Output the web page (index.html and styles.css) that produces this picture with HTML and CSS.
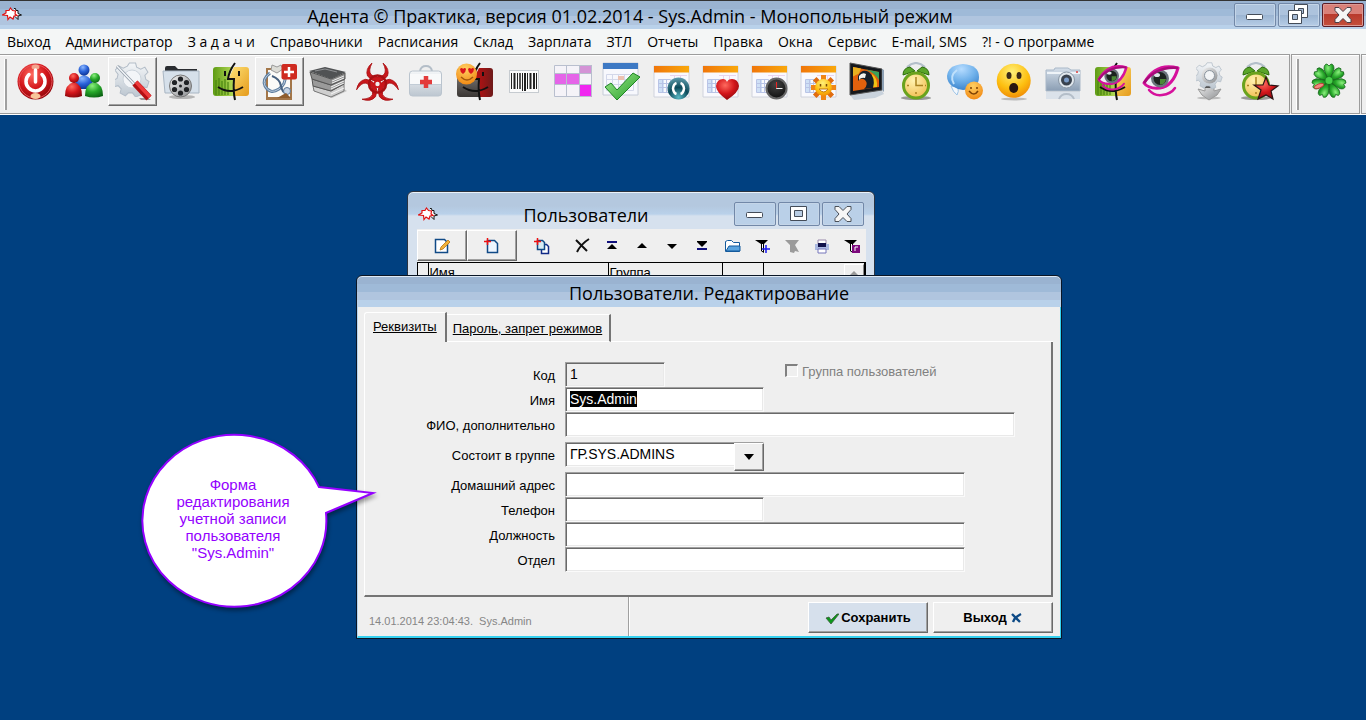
FILE: index.html
```html
<!DOCTYPE html>
<html lang="ru">
<head>
<meta charset="utf-8">
<title>Адента © Практика</title>
<link rel="stylesheet" href="styles.css">
</head>
<body>
<svg class="sprite" aria-hidden="true">
  <defs>
    <radialGradient id="gRed" cx=".4" cy=".3" r=".8"><stop offset="0" stop-color="#ff6a5e"/><stop offset=".5" stop-color="#d3161b"/><stop offset="1" stop-color="#7d0509"/></radialGradient>
    <radialGradient id="gBlue" cx=".4" cy=".25" r=".8"><stop offset="0" stop-color="#8db8ff"/><stop offset=".5" stop-color="#2a62d8"/><stop offset="1" stop-color="#0b2f8e"/></radialGradient>
    <radialGradient id="gGreen" cx=".4" cy=".25" r=".8"><stop offset="0" stop-color="#8cf07e"/><stop offset=".5" stop-color="#27a82a"/><stop offset="1" stop-color="#0a6212"/></radialGradient>
    <radialGradient id="gSky" cx=".45" cy=".2" r=".9"><stop offset="0" stop-color="#b6dcff"/><stop offset=".5" stop-color="#6eb0ea"/><stop offset="1" stop-color="#2f78c4"/></radialGradient>
    <radialGradient id="gYellow" cx=".45" cy=".25" r=".8"><stop offset="0" stop-color="#fff07a"/><stop offset=".6" stop-color="#fdbf10"/><stop offset="1" stop-color="#ee8606"/></radialGradient>
    <radialGradient id="gOrange" cx=".45" cy=".25" r=".8"><stop offset="0" stop-color="#ffd063"/><stop offset="1" stop-color="#f1860f"/></radialGradient>
    <radialGradient id="gTeal" cx=".5" cy=".9" r=".9"><stop offset="0" stop-color="#58b8c4"/><stop offset=".5" stop-color="#0c4a5a"/><stop offset="1" stop-color="#5f9cac"/></radialGradient>
    <radialGradient id="gBlack" cx=".45" cy=".3" r=".8"><stop offset="0" stop-color="#444"/><stop offset="1" stop-color="#0a0a0a"/></radialGradient>
    <linearGradient id="gSteel" x2="0" y2="1"><stop offset="0" stop-color="#f4f6f8"/><stop offset="1" stop-color="#bcc6d0"/></linearGradient>
    <linearGradient id="gGrey" x2="1" y2="1"><stop offset="0" stop-color="#f2f2f2"/><stop offset="1" stop-color="#8b8d90"/></linearGradient>
    <linearGradient id="gCam" x2="0" y2="1"><stop offset="0" stop-color="#d5dfea"/><stop offset="1" stop-color="#8a9db3"/></linearGradient>
    <linearGradient id="gBar" x2="1"><stop offset="0" stop-color="#f0760a"/><stop offset="1" stop-color="#f9a80c"/></linearGradient>
    <linearGradient id="gLime" x2="1"><stop offset="0" stop-color="#5f9c14"/><stop offset="1" stop-color="#b9de5c"/></linearGradient>
    <linearGradient id="gSand" x2="1" y2="1"><stop offset="0" stop-color="#ffe479"/><stop offset="1" stop-color="#e59b1c"/></linearGradient>
    <linearGradient id="gWine" x2="1"><stop offset="0" stop-color="#c80f10"/><stop offset="1" stop-color="#6e1a1a"/></linearGradient>
    <linearGradient id="gCoal" x2="0" y2="1"><stop offset="0" stop-color="#8a8683"/><stop offset="1" stop-color="#3a3634"/></linearGradient>
    <linearGradient id="gCheck" x2="1" y2="1"><stop offset="0" stop-color="#a2ec90"/><stop offset="1" stop-color="#1f9a24"/></linearGradient>
    <radialGradient id="gClock" cx=".4" cy=".3" r=".8"><stop offset="0" stop-color="#fff3b0"/><stop offset="1" stop-color="#efb848"/></radialGradient>
    <symbol id="logo" viewBox="0 0 20 14">
      <path d="M12 1.500h1.500l.5 2h2v3l3.500 1.500-3.500 1v3.500l-3-3" fill="#fff" stroke="#111"/>
      <path d="M8.500 1l2 2.500 3 .5-.5 3 2 1.500-3 .5-1 3-3-2-2 2.500-.5-4L.5 8 4 6V3.500h3z" fill="#fff" stroke="#e01010" stroke-width="1.200"/>
    </symbol>
    <symbol id="gear" viewBox="0 0 34 34">
      <path d="M14 1h6l1 4 4 2 4-2 3 5-3 3 1 4 3 2-2 6-4-1-3 4 1 4-5 2-3-4h-4l-3 3-5-3 1-4-3-3-4 1-1-6 4-2 1-4-3-4 4-4 4 2 4-2z" fill="url(#gSteel)" stroke="#b3bdc8"/>
    </symbol>
    <symbol id="calendar" viewBox="0 0 39 39">
      <path d="M2 4h35v31H2z" fill="#f9f9fd" stroke="#cfd2dc"/>
      <path d="M7 18h5v12H7z" fill="#cfe0f6"/>
      <path d="M6.500 17.500h12v13h-12zM6.500 21.500h28M6.500 25.500h28M10.500 17v13M14.500 17v13" fill="none" stroke="#b9c4e6"/>
      <path d="M2 4h35v6.500H2z" fill="url(#gBar)"/>
      <path d="M18 13.500h17M22.500 14v14M28.500 14v14" stroke="#ead3ee"/>
    </symbol>
    <symbol id="faces" viewBox="0 0 39 39">
      <path d="M5 5h17l-5 12h6l1 17H5q-3 0-3-3V8q0-3 3-3z" fill="url(#gLime)"/>
      <path d="M5 18v15M8 16v17M11 19v14M14 17v16M17 20v13" stroke="#4b8612" stroke-width="1.200"/>
      <path d="M23 5h12q3 0 3 3v23q0 3-3 3H24l-1-16h-6z" fill="url(#gSand)"/>
      <path d="M24 1q-6 8-7 16h6q-1 12 1 21M7 25q12 8 25 0" fill="none" stroke="#111" stroke-width="2"/>
      <path d="M14 9v5M28 9v5" stroke="#111" stroke-width="2"/>
    </symbol>
    <symbol id="eye" viewBox="0 0 38 34">
      <path d="M2 19Q14-2 36 4 31 22 18 24 6 25 2 19z" fill="#eef2f6" stroke="#d6119c" stroke-width="3" stroke-linejoin="round"/>
      <circle cx="18" cy="14.500" r="9" fill="#6b747c"/>
      <circle cx="18" cy="14.500" r="6.500" fill="#1c2420"/>
      <path d="M18 15l6 0q-1 6-6 5.500z" fill="#4c8a36"/>
      <ellipse cx="15" cy="11" rx="3" ry="2" fill="#dfe6ea"/>
      <path d="M2 19Q14 2 36 4" fill="none" stroke="#a80a7a" stroke-width="2.500"/>
      <path d="M7 26q5 6 13 5 9-1 13-7" fill="none" stroke="#d6119c" stroke-width="2.500" stroke-linecap="round"/>
    </symbol>
    <symbol id="alarm" viewBox="0 0 39 39">
      <ellipse cx="19" cy="36" rx="15" ry="2" fill="#999"/>
      <path d="M10 5q9-8 18 0M13 8l-1-4M25 8l1-4" fill="none" stroke="#b4bfca" stroke-width="2"/>
      <path d="M6 13q0-7 7-8l5 4zM32 13q0-7-7-8l-5 4z" fill="#5aa52a" stroke="#2d6c0c"/>
      <circle cx="19" cy="23.500" r="12.500" fill="url(#gClock)" stroke="#6aa31d" stroke-width="3"/>
      <path d="M19 15v8.500h7M19 32v-2M10 23.500h2M28 23.500h1" fill="none" stroke="#a88220" stroke-width="1.500"/>
    </symbol>
    <path id="horn" d="M14 1Q7 7 9.500 14q4.500 5.500 10 5.500t10-5.500Q32 7 25 1q4 8 1 11.500-2.500 2.500-6.500 2.500T13 12.500Q10 9 14 1z"/>
  </defs>
</svg>

<header class="titlebar">
  <svg class="logo"><use href="#logo"/></svg>
  <h1 class="caption">Адента © Практика, версия 01.02.2014 - Sys.Admin - Монопольный режим</h1>
  <div class="winbtns">
    <button class="winbtn" aria-label="Свернуть"><svg viewBox="0 0 42 24"><rect x="12.500" y="11.500" width="16" height="5" rx="1" fill="#fff" stroke="#444c58"/></svg></button>
    <button class="winbtn" aria-label="Восстановить"><svg viewBox="0 0 42 24"><path d="M16.500 1.500h13v13h-13z" fill="#fff" stroke="#444c58"/><path d="M20.500 5.500h5v5h-5z" fill="#a5bad4" stroke="#444c58"/><path d="M10.500 7.500h13v13h-13z" fill="#fff" stroke="#444c58"/><path d="M14.500 11.500h5v5h-5z" fill="#a5bad4" stroke="#444c58"/></svg></button>
    <button class="winbtn winbtn-close" aria-label="Закрыть"><svg viewBox="0 0 42 24"><path d="M13 4.500h4l4 4 4-4h4v3l-4 4.500 4 4.500v3h-4l-4-4-4 4h-4v-3l4-4.500-4-4.500z" fill="#f6f6f6" stroke="#4a4048"/></svg></button>
  </div>
</header>

<nav class="menu">
  <a href="#">Выход</a><a href="#">Администратор</a><a href="#">З а д а ч и</a><a href="#">Справочники</a><a href="#">Расписания</a><a href="#">Склад</a><a href="#">Зарплата</a><a href="#">ЗТЛ</a><a href="#">Отчеты</a><a href="#">Правка</a><a href="#">Окна</a><a href="#">Сервис</a><a href="#">E-mail, SMS</a><a href="#">?! - О программе</a>
</nav>

<div class="toolbar">
  <div class="band">
    <button class="tool" aria-label="Выход"><svg viewBox="0 0 39 39"><circle cx="20.500" cy="19.500" r="18" fill="url(#gRed)"/><circle cx="20.500" cy="19.500" r="16.500" fill="none" stroke="#e8555a"/><ellipse cx="20.500" cy="5" rx="4" ry="2.500" fill="#f3a58e"/><ellipse cx="20.500" cy="34" rx="5" ry="3" fill="#f8c59a"/><path d="M14 12.500a9.500 9.500 0 1 0 13 0M20.500 8v12" fill="none" stroke="#fff" stroke-width="3.500" stroke-linecap="round"/></svg></button>
    <button class="tool" aria-label="Пользователи"><svg viewBox="0 0 39 39"><path d="M10 27q1-12 10-14 9 2 10 14z" fill="url(#gBlue)"/><circle cx="20" cy="8" r="5.500" fill="url(#gBlue)"/><path d="M1 34q0-12 9-14 8 2 8 14-8 3-17 0z" fill="url(#gRed)"/><circle cx="10" cy="16" r="5" fill="url(#gRed)"/><path d="M21 34q0-12 9-14 9 2 9 14-9 3-18 0z" fill="url(#gGreen)"/><circle cx="31" cy="16" r="5" fill="url(#gGreen)"/></svg></button>
    <button class="tool tool-raised" aria-label="Настройки"><svg viewBox="0 0 39 39"><use href="#gear" x="2" y="0" width="35" height="35"/><circle cx="19" cy="17" r="9" fill="#f3f5f8" stroke="#ccd4dc"/><path d="M4 4l18 19" stroke="#8f9aa6" stroke-width="3"/><path d="M4 4l18 19" stroke="#f3f6f9" stroke-width="1.500"/><path d="M26 36h9l3 2H28z" fill="#999"/><path d="M22 21l14 15" stroke="#b30f12" stroke-width="7"/><path d="M23 20l14 15" stroke="#ee3a3b" stroke-width="3.500"/></svg></button>
    <button class="tool" aria-label="Видео"><svg viewBox="0 0 39 39"><path d="M3 11V6q0-2 2-2h8l3 3h19v5z" fill="#2a2c30"/><path d="M1 9h36v22H3z" fill="#d6e0ea" stroke="#a9b6c3"/><ellipse cx="20" cy="35" rx="13" ry="2" fill="#b5b5b5"/><circle cx="18.500" cy="24" r="11" fill="url(#gGrey)" stroke="#777"/><g fill="#202225"><circle cx="18.500" cy="17" r="2.600"/><circle cx="24.500" cy="20.500" r="2.600"/><circle cx="24.500" cy="27.500" r="2.600"/><circle cx="18.500" cy="31" r="2.600"/><circle cx="12.500" cy="27.500" r="2.600"/><circle cx="12.500" cy="20.500" r="2.600"/><circle cx="18.500" cy="24" r="1.500"/></g></svg></button>
    <button class="tool" aria-label="Клиенты"><svg viewBox="0 0 39 39"><use href="#faces"/></svg></button>
    <button class="tool tool-raised" aria-label="Медкарта"><svg viewBox="0 0 39 39"><path d="M6 6h26v32H6z" fill="#a37648"/><path d="M8 8h22v27H8z" fill="#fbfbf8"/><path d="M12 3l5 2 4-2 2 4-6 4-6-3z" fill="#dcdcd6" stroke="#999"/><path d="M10 11q-8 6-5 13 5 9 14 3 7-5 6-13" fill="none" stroke="#5f7f9f" stroke-width="3"/><path d="M10 11q-8 6-5 13 5 9 14 3 7-5 6-13" fill="none" stroke="#bccde0" stroke-width="1"/><path d="M12 14q8 3 9 10 1 6 5 7" fill="none" stroke="#46607e" stroke-width="2"/><circle cx="27" cy="29" r="3.500" fill="#c4d3e4" stroke="#5c7896"/><path d="M17 36l9-5 5 5z" fill="#8f5d2c"/><rect x="21.500" y="2" width="15.500" height="15.500" rx="2" fill="#cf2b20"/><path d="M29 5v10M24 10h10" stroke="#fff" stroke-width="2.500"/></svg></button>
    <button class="tool" aria-label="Документы"><svg viewBox="0 0 39 39"><path d="M3 28l20 8 15-7-6-4z" fill="#c4c4c4"/><path d="M4 24l18 5 13-7v7l-13 6-17-6z" fill="#cfcfcf" stroke="#777"/><path d="M3 17l19 6 13-7v6l-13 7-18-5z" fill="#9a9a9a" stroke="#555"/><path d="M22 25l13-6M22 27l13-6M22 32l13-6" stroke="#f4f4f4"/><path d="M1 10l21 7 14-6v6l-14 6L3 17z" fill="#8d8d8d" stroke="#555"/><path d="M0 9L16 5l21 5-15 7z" fill="#505254"/><path d="M23 19l12-5M23 21l12-5" stroke="#f3f3f3"/><path d="M6 9l10-2 12 3" stroke="#8e9093" fill="none"/></svg></button>
    <button class="tool" aria-label="Биологическая опасность"><svg viewBox="0 0 39 39"><g fill="#c9171b" stroke="#a81013" stroke-width=".8"><use href="#horn"/><use href="#horn" transform="rotate(120 19.500 22)"/><use href="#horn" transform="rotate(240 19.500 22)"/></g><circle cx="19.500" cy="22" r="8.500" fill="none" stroke="#a81013" stroke-width="2.500"/><circle cx="19.500" cy="22" r="4" fill="#c9171b"/><circle cx="19.500" cy="22" r="2.200" fill="#efefef"/></svg></button>
    <button class="tool" aria-label="Аптечка"><svg viewBox="0 0 39 39"><path d="M13 9q1-5 6-5t6 5" fill="none" stroke="#b4bec8" stroke-width="2"/><rect x="2.500" y="9" width="32" height="25" rx="3" fill="url(#gSteel)" stroke="#bac4ce"/><path d="M3 12h31v10H3z" fill="#f8f9fa"/><path d="M3 22.500h31" stroke="#c2ccd6"/><path d="M19 14v12M13 20h12" stroke="#e33b3b" stroke-width="4.500"/></svg></button>
    <button class="tool" aria-label="Клиент с отметкой"><svg viewBox="0 0 39 39"><path d="M4 6h18l-5 12h6l1 17H4q-3 0-3-3V9q0-3 3-3z" fill="url(#gCoal)"/><path d="M23 6h11q3 0 3 3v23q0 3-3 3H24l-1-17h-6z" fill="url(#gWine)"/><path d="M24 1q-6 8-7 16h6q-1 12 1 21M7 25q12 8 25 0M27 10v4" fill="none" stroke="#111" stroke-width="2"/><circle cx="10.500" cy="12" r="10.500" fill="url(#gOrange)"/><path d="M4 7q2-2 3 0 2-2 3 0 0 3-3 5-3-2-3-5zM12 7q2-2 3 0 2-2 3 0 0 3-3 5-3-2-3-5z" fill="#d9151b"/><path d="M5 15q6 6 12 0" fill="none" stroke="#a5580c" stroke-width="1.500"/></svg></button>
    <button class="tool" aria-label="Штрихкод"><svg viewBox="0 0 39 39"><rect x="4.500" y="8.500" width="29" height="22" fill="#fbfbfb" stroke="#c6cbd0"/><path d="M6.500 11v16M12.500 11v16M17.500 11v18M22.500 11v16M31.500 11v16" stroke="#222"/><path d="M9.500 11v16M20 11v18M25.500 11v16M29 11v16" stroke="#222" stroke-width="2"/><path d="M15 11v16" stroke="#222" stroke-width="1.500"/></svg></button>
    <button class="tool" aria-label="Сетка"><svg viewBox="0 0 39 39"><path d="M0 3h38v32H0z" fill="#f5f3f8"/><path d="M0 12h26v10H0z" fill="#e564e8"/><path d="M26 3h12v8H26z" fill="#d493d6"/><path d="M26 23h12v12H26z" fill="#f027f0"/><path d="M.5 3.500h37v31H.5zM12.500 3v32M25.500 3v32M0 11.500h38M0 22.500h38" fill="none" stroke="#b9bfce"/></svg></button>
    <button class="tool" aria-label="Выполнено"><svg viewBox="0 0 39 39"><path d="M0 1h35v32H0z" fill="#f7f8fd" stroke="#c6ccd8"/><path d="M0 1h35v6H0z" fill="#3d79c4"/><path d="M3.500 12.500h27v16h-27zM3.500 17.500h27M3.500 22.500h27M9.500 12v16M15.500 12v16M21.500 12v16" fill="none" stroke="#d3d8ea"/><path d="M15 14h6v4h-6z" fill="#ecc2b2"/><path d="M2 25l6-4 6 7 16-17 7 4-23 23z" fill="url(#gCheck)" stroke="#1d8523"/></svg></button>
    <button class="tool" aria-label="Календарь обмена"><svg viewBox="0 0 39 39"><use href="#calendar"/><circle cx="26.500" cy="26.500" r="11" fill="url(#gTeal)"/><path d="M24.500 21q-3 1-3.500 5.500 .5 4.500 3.500 5.500M28.500 21q3 1 3.500 5.500-.5 4.500-3.500 5.500" fill="none" stroke="#fff" stroke-width="2.500"/></svg></button>
    <button class="tool" aria-label="Календарь избранного"><svg viewBox="0 0 39 39"><use href="#calendar"/><path d="M26 38q-11-8-11-14 1-7 7-7 3 0 4 3 1-3 5-3 6 0 7 7 0 6-12 14z" fill="url(#gRed)"/></svg></button>
    <button class="tool" aria-label="Календарь времени"><svg viewBox="0 0 39 39"><use href="#calendar"/><circle cx="26.500" cy="26.500" r="10" fill="url(#gBlack)" stroke="#666" stroke-width="2"/><path d="M26.500 20v6.500h6" fill="none" stroke="#eee"/><path d="M26.500 26v-6" stroke="#e22"/></svg></button>
    <button class="tool" aria-label="Календарь отпусков"><svg viewBox="0 0 39 39"><use href="#calendar"/><g stroke="#f08616" stroke-width="5"><path d="M24.500 13v25M12 25.500h25"/><path d="M15.700 16.700l17.600 17.600M33.300 16.700L15.700 34.300" stroke="#e06c10"/></g><circle cx="24.500" cy="25.500" r="8.500" fill="url(#gYellow)"/><path d="M21.500 22v2.500M27.500 22v2.500" stroke="#7a4806" stroke-width="1.500"/><path d="M20 27q5 6 9 0z" fill="#fff" stroke="#c07a18"/></svg></button>
    <button class="tool" aria-label="Телевизор"><svg viewBox="0 0 39 39"><path d="M2 33l4 5 21-2 9-4-3-5z" fill="#c9d2dc"/><path d="M2 1l32 6v21L2 33z" fill="#15181d" stroke="#555"/><path d="M34 7l2 1v22l-2-2z" fill="#8da0b4"/><path d="M5 5l26 5v15L5 29z" fill="#e2610d"/><path d="M5 5l8 1.500-2 5-6 3z" fill="#e8b020"/><path d="M18 7.500l13 2.500v8q-4-7-13-10.500z" fill="#3aa05a"/><path d="M24 12q6 4 5 13h-4z" fill="#f3c314"/><path d="M10 14q4-8 11-4 7 6 4 16l-9 1q5-5 1-9-4-3-7 1z" fill="#15202a"/><path d="M11 14q3-4 7-2l-1 4q-4-1-6 2z" fill="#f3f3ee"/></svg></button>
    <button class="tool" aria-label="Будильник"><svg viewBox="0 0 39 39"><use href="#alarm"/></svg></button>
    <button class="tool" aria-label="Сообщения"><svg viewBox="0 0 39 39"><path d="M12 25q1 5-1 8-4-3-6-9z" fill="#f3f8fd" stroke="#9cc3e6"/><path d="M17 2q16 1 16 13T17 28l-5-1-6-3q-5-4-5-10Q2 3 17 2z" fill="url(#gSky)"/><path d="M8 22q-5-8 3-14" fill="none" stroke="#bfe0fb" stroke-width="2"/><circle cx="28" cy="28.500" r="9" fill="url(#gOrange)"/><path d="M23 29q5 6 9 0M25 25v2M31 25v2" fill="none" stroke="#7d4104" stroke-width="1.500"/></svg></button>
    <button class="tool" aria-label="Эмоции"><svg viewBox="0 0 39 39"><ellipse cx="19" cy="37" rx="13" ry="1.500" fill="#bbb"/><circle cx="18.700" cy="18.700" r="17" fill="url(#gYellow)"/><ellipse cx="14" cy="13.500" rx="2.500" ry="3.500" fill="#3c2a1a"/><ellipse cx="24" cy="13.500" rx="2.500" ry="3.500" fill="#3c2a1a"/><ellipse cx="18.700" cy="26" rx="4.500" ry="5" fill="#2a1710"/></svg></button>
    <button class="tool" aria-label="Фото"><svg viewBox="0 0 39 39"><path d="M2 8h8l1-2h13l3 2h9v21H2z" fill="url(#gCam)" stroke="#a9b8c8"/><path d="M3 11h33" stroke="#eef3f8" stroke-width="2"/><circle cx="22.500" cy="18" r="8" fill="#dfe6ec" stroke="#8795a4"/><circle cx="22.500" cy="18" r="5.500" fill="#39424e"/><circle cx="22.500" cy="18" r="2.500" fill="#7b9cc8"/><path d="M32 9h2v2h-2z" fill="#d66"/><path d="M2 30h34v7H2z" fill="#dbe2ea"/><path d="M15 37q2-5 7.500-5t7.500 5" fill="none" stroke="#b4bec9" stroke-width="2"/></svg></button>
    <button class="tool" aria-label="Просмотр клиентов"><svg viewBox="0 0 39 39"><use href="#faces"/><use href="#eye" x="4" y="2" width="31" height="28"/></svg></button>
    <button class="tool" aria-label="Просмотр"><svg viewBox="0 0 39 39"><use href="#eye" x="0" y="2" width="38" height="34"/></svg></button>
    <button class="tool" aria-label="Механизм"><svg viewBox="0 0 39 39"><ellipse cx="18" cy="36" rx="12" ry="1.500" fill="#bbb"/><path d="M14 22h9v7l7-2-4 6-8 5-7-5-4-6 7 2z" fill="url(#gGrey)" stroke="#999"/><path d="M14 25h9" stroke="#555" stroke-width="2"/><use href="#gear" x="5" y="0" width="27" height="27"/><circle cx="18.500" cy="13.500" r="8" fill="url(#gGrey)"/><circle cx="18.500" cy="13.500" r="5" fill="#f2f4f6" stroke="#8a949e"/></svg></button>
    <button class="tool" aria-label="Важное напоминание"><svg viewBox="0 0 39 39"><use href="#alarm" x="-3" width="39" height="39"/><path d="M26 15l3 8 9 1-7 5 2 8-7-4-8 4 3-9-7-5h9z" fill="url(#gRed)" stroke="#2c1416" stroke-width="1.200"/></svg></button>
  </div>
  <div class="band band-clover">
    <button class="tool" aria-label="Клевер"><svg viewBox="0 0 39 39"><circle cx="19" cy="19" r="9" fill="#1d6f22"/><g fill="url(#gGreen)" stroke="#1b6a1f" stroke-width=".8"><path id="leaf" d="M19 18q-4-6-5-11 0-5 3-5l2 2 2-2q3 0 3 5-1 5-5 11z"/><use href="#leaf" transform="rotate(51 19 19)"/><use href="#leaf" transform="rotate(103 19 19)"/><use href="#leaf" transform="rotate(154 19 19)"/><use href="#leaf" transform="rotate(206 19 19)"/><use href="#leaf" transform="rotate(257 19 19)"/><use href="#leaf" transform="rotate(309 19 19)"/></g><ellipse cx="9" cy="24" rx="5" ry="2" fill="#f08a80" stroke="#b33" stroke-width=".8" transform="rotate(-20 9 24)"/><circle cx="19" cy="18.500" r="3.500" fill="#49cf4a"/></svg></button>
  </div>
  <div class="band band-rest"></div>
</div>

<main class="workspace">
  <section class="window users">
    <header class="users-title">
      <svg class="logo"><use href="#logo"/></svg>
      <h2 class="caption">Пользователи</h2>
      <div class="winbtns">
        <button class="winbtn" aria-label="Свернуть"><svg viewBox="0 0 42 24"><rect x="12.500" y="10.500" width="16" height="5" rx="1" fill="#fff" stroke="#444c58"/></svg></button>
        <button class="winbtn" aria-label="Развернуть"><svg viewBox="0 0 42 24"><path d="M12.500 4.500h16v14h-16z" fill="#fff" stroke="#444c58"/><path d="M16.500 8.500h8v6h-8z" fill="#b9cde4" stroke="#444c58"/></svg></button>
        <button class="winbtn" aria-label="Закрыть"><svg viewBox="0 0 42 24"><path d="M13 4.500h4l4 4 4-4h4v3l-4 4.500 4 4.500v3h-4l-4-4-4 4h-4v-3l4-4.500-4-4.500z" fill="#f6f6f6" stroke="#4a5058"/></svg></button>
      </div>
    </header>
    <div class="users-body">
      <div class="users-tools">
        <button class="utool utool-big" aria-label="Изменить"><svg viewBox="0 0 18 18"><path d="M2.500 2.500h9l3 3v10h-12z" fill="#fff" stroke="#104a86" stroke-width="1.500"/><path d="M7 13l1-3 7-7 2 2-7 7z" fill="#f2b23a" stroke="#b87512" stroke-width=".8"/></svg></button>
        <button class="utool utool-big" aria-label="Добавить"><svg viewBox="0 0 18 18"><path d="M4.500 3.500h7l3 3v9h-10z" fill="#eef6ff" stroke="#104a86" stroke-width="1.500"/><path d="M4.500 1v7M1 4.500h7" stroke="#e11" stroke-width="1.500"/></svg></button>
        <button class="utool utool-mid" aria-label="Копировать"><svg viewBox="0 0 18 18"><path d="M8.500 7.500h5l2 2v7h-7z" fill="#fff" stroke="#102a86" stroke-width="1.500"/><path d="M4.500 3.500h5l2 2v7h-7z" fill="#d7ecf4" stroke="#104a86" stroke-width="1.500"/><path d="M4.500 1v7M1 4.500h7" stroke="#e11" stroke-width="1.500"/></svg></button>
        <button class="utool" aria-label="Удалить"><svg viewBox="0 0 18 18"><path d="M3 3l11 11M16 2Q8 7 4 15" fill="none" stroke="#111" stroke-width="2"/></svg></button>
        <button class="utool" aria-label="Первая"><svg viewBox="0 0 18 18"><path d="M4 5h10" stroke="#10107c" stroke-width="2"/><path d="M9 7l5 5H4z"/></svg></button>
        <button class="utool" aria-label="Предыдущая"><svg viewBox="0 0 18 18"><path d="M9 6l5 5H4z"/></svg></button>
        <button class="utool" aria-label="Следующая"><svg viewBox="0 0 18 18"><path d="M9 12l5-5H4z"/></svg></button>
        <button class="utool" aria-label="Последняя"><svg viewBox="0 0 18 18"><path d="M4 4h10v1l-5 5-5-5z"/><path d="M4 12h10" stroke="#10107c" stroke-width="2"/></svg></button>
        <button class="utool" aria-label="Открыть"><svg viewBox="0 0 18 18"><path d="M2.500 14.500v-10l2-1h4l2 2h6v9z" fill="#fff" stroke="#155a9c"/><path d="M3 14l3-5h11v5z" fill="#5aa4e0" stroke="#155a9c"/></svg></button>
        <button class="utool" aria-label="Фильтр"><svg viewBox="0 0 18 18"><path d="M2 3h13l-4 4v9l-3-2V7z"/><path d="M9.500 7v7" stroke="#fff"/><path d="M13 8v8M9 12h8" stroke="#1a1af0" stroke-width="1.500"/></svg></button>
        <button class="utool" aria-label="Снять фильтр"><svg viewBox="0 0 18 18"><path d="M2 3h14l-4 5 4 7-4-1-1 2-4-1V8z" fill="#9b9b9b"/></svg></button>
        <button class="utool" aria-label="Печать"><svg viewBox="0 0 18 18"><path d="M5 3h8v4H5z" fill="#fff" stroke="#98a"/><path d="M2 7h14v6H2z" fill="#aab8e0"/><path d="M5 6h8v4H5z" fill="#11114a"/><path d="M5 12h8v4H5z" fill="#fff" stroke="#77b"/></svg></button>
        <button class="utool" aria-label="Фильтр отчета"><svg viewBox="0 0 18 18"><path d="M1 3h13l-4 4v9l-3-2V7z"/><path d="M8.500 7v7" stroke="#fff"/><path d="M9 8h8v8H9z" fill="#7d0a7d"/><path d="M12 14v-4h3" fill="none" stroke="#fff"/></svg></button>
      </div>
      <div class="grid">
        <table class="users-table">
          <thead><tr><th class="c-mark"></th><th class="c-name">Имя</th><th class="c-group">Группа</th><th class="c-flag"></th><th></th></tr></thead>
        </table>
        <div class="scroll"><svg viewBox="0 0 18 18"><path d="M9 6l5 5H4z" fill="#999"/></svg></div>
      </div>
    </div>
  </section>

  <form class="window dialog">
    <h2 class="dialog-title caption">Пользователи. Редактирование</h2>
    <div class="dialog-body">
      <div class="tabs">
        <a class="tab tab-active" href="#main">Реквизиты</a>
        <a class="tab" href="#rights">Пароль, запрет режимов</a>
        <span class="tabs-rest"></span>
      </div>
      <div class="panel" id="main">
        <div class="row"><label for="code">Код</label><input class="field w-s" id="code" value="1" readonly>
          <span class="check"><input type="checkbox" id="isgroup" disabled><label for="isgroup">Группа пользователей</label></span></div>
        <div class="row"><label for="name">Имя</label><input class="field w-m" id="name" value="Sys.Admin"></div>
        <div class="row"><label for="fio">ФИО, дополнительно</label><input class="field w-xl" id="fio"></div>
        <div class="row row-combo"><label for="group">Состоит в группе</label><span class="combo w-m"><select class="field" id="group"><option>ГР.SYS.ADMINS</option></select><span class="combo-arrow"><svg viewBox="0 0 12 8"><path d="M1 1h10L6 7z"/></svg></span></span></div>
        <div class="row"><label for="address">Домашний адрес</label><input class="field w-l" id="address"></div>
        <div class="row"><label for="phone">Телефон</label><input class="field w-m" id="phone"></div>
        <div class="row"><label for="post">Должность</label><input class="field w-l" id="post"></div>
        <div class="row"><label for="dept">Отдел</label><input class="field w-l" id="dept"></div>
      </div>
      <footer class="foot">
        <div class="stamp">14.01.2014 23:04:43.&nbsp; Sys.Admin</div>
        <button type="button" class="btn btn-main"><svg viewBox="0 0 14 14"><path d="M1 7l3-1 2 3 6-6 2 0-8 10z" fill="#0a9a1a" stroke="#3d5c3d" stroke-width=".8"/></svg>Сохранить</button>
        <button type="button" class="btn">Выход<svg class="icon-after" viewBox="0 0 14 14"><path d="M3 3l8 8M12 3q-6 3-8 8" fill="none" stroke="#0d4a86" stroke-width="2.400"/></svg></button>
      </footer>
    </div>
  </form>

  <aside class="callout">
    <svg class="callout-shape" viewBox="0 0 244 184"><path d="M183 57L237 63 190 83A92 86 0 1 1 183 57z"/></svg>
    <p>Форма редактирования учетной записи пользователя "Sys.Admin"</p>
  </aside>
</main>
<script src="script.js"></script>
</body>
</html>
```

FILE: styles.css
```css
* { box-sizing: border-box; }

body {
  margin: 0;
  min-height: 100vh;
  display: flex;
  flex-direction: column;
  font-family: "Liberation Sans", Arial, sans-serif;
  font-size: 13px;
  color: #000;
  background: #004080;
}

button { margin: 0; padding: 0; font: inherit; color: inherit; background: none; border: 0; }
button svg { display: block; }
a { color: inherit; text-decoration: none; }

.sprite { position: absolute; width: 0; height: 0; }
.logo { width: 20px; height: 14px; flex: none; }

.caption {
  margin: 0;
  flex: 1;
  text-align: center;
  font: 400 18px/24px "Open Sans", "Noto Sans", sans-serif;
  white-space: nowrap;
}

/* Main title bar */
.titlebar {
  display: flex;
  align-items: center;
  height: 29px;
  padding: 0 2px;
  border-top: 1px solid #333;
  background: linear-gradient(#9ab3d1 0 8px, #9fbad8 8px 15px, #b0c5df 15px 24px, #b9d1ea 24px);
}
.titlebar .logo { margin-bottom: 3px; }
.titlebar .caption { padding: 1px 0 0 4px; }

.winbtns { display: flex; gap: 2px; }
.winbtn {
  width: 42px;
  height: 24px;
  border: 1px solid #7288a8;
  border-radius: 2px;
  box-shadow: inset 0 0 0 1px #c4d5e8;
  background: linear-gradient(#adc3dd 50%, #9bb4d2 50%, #b6cde6);
}
.users .winbtn { background: #bad0e8; }
.winbtn svg { width: 42px; height: 24px; margin: -1px; }
.winbtn-close {
  border-color: #5a1c26;
  box-shadow: inset 0 0 0 1px #dc9a94;
  background: linear-gradient(#d98078 45%, #b8392c 45%, #c4503c);
}

.menu {
  display: flex;
  gap: 15px;
  height: 25px;
  padding: 0 7px;
  background: #f4f6f6;
  font: 14px/25px "Open Sans", "Noto Sans", sans-serif;
  white-space: nowrap;
}

/* Toolbar */
.toolbar { display: flex; gap: 1px; height: 61px; background: #efefef; border-bottom: 1px solid #fff; }
.band {
  display: flex;
  flex: none;
  padding: 1px 5px 0 4px;
  border: 1px solid #9c9c9c;
  border-left: 0;
  box-shadow: inset 0 1px #fff;
}
.band::before {
  content: "";
  width: 2px;
  margin: 3px 3px 3px 0;
  border-left: 1px solid #fff;
  background: #a0a0a0;
}
.band + .band { border-left: 1px solid #9c9c9c; }
.band-clover::before { margin-right: 6px; }
.band + .band-rest { flex: 1; }
.band-rest::before { display: none; }
.tool { width: 49px; height: 49px; padding: 5px; margin-top: 1px; }
.tool svg { width: 39px; height: 39px; overflow: visible; }
.tool-raised {
  padding: 4px;
  border: 1px solid;
  border-color: #fff #696969 #696969 #fff;
  box-shadow: inset -1px -1px #a0a0a0;
}

.workspace { position: relative; flex: 1; overflow: hidden; }
.window { position: absolute; }

/* Users window */
.users {
  left: 407px;
  top: 76px;
  width: 468px;
  padding: 0 8px 0 9px;
  border: 1px solid #2b3340;
  border-radius: 6px 6px 0 0;
  background: linear-gradient(#b4c8df 0 14px, #b9d1ea 22px, #d6e1ee 24px);
  box-shadow: inset 0 1px #eaf2fa;
}
.users-title { display: flex; align-items: center; height: 37px; padding: 7px 2px 0 1px; }
.users-title .caption { padding-top: 2px; }
.users-body { background: #efefef; height: 100px; }
.users-tools { display: flex; align-items: center; height: 33px; }
.utool { width: 30px; height: 31px; padding: 6px; }
.utool svg { width: 18px; height: 18px; }
.utool-big { width: 50px; padding: 5px 15px; border: 1px solid; border-color: #fff #696969 #696969 #fff; box-shadow: inset -1px -1px #a0a0a0; }
.utool-mid { width: 50px; padding: 6px 16px; }
.grid { position: relative; border: 1px solid #000; height: 60px; }
.users-table { width: 100%; border-collapse: collapse; table-layout: fixed; font: 13px/20px "Liberation Sans", sans-serif; }
.users-table th { height: 20px; padding: 0 1px; text-align: left; font-weight: 400; border-right: 1px solid #000; }
.c-mark { width: 10px; }
.c-name { width: 180px; }
.c-group { width: 114px; }
.c-flag { width: 41px; }
.scroll { position: absolute; top: 1px; right: 1px; width: 20px; height: 20px; background: #efefef; border: 1px solid; border-color: #fff #888 #888 #fff; }
.scroll svg { display: block; width: 18px; height: 18px; }

/* Edit dialog */
.dialog {
  left: 356px;
  top: 160px;
  width: 706px;
  border: 1px solid #0a1626;
  border-radius: 6px 6px 0 0;
  background: linear-gradient(#9ab3d1 0 8px, #9fbad8 8px 16px, #b0c5df 16px 24px, #b9d1ea 24px);
  box-shadow: inset 0 1px #dfeaf5;
}
.dialog-title { height: 31px; padding-top: 5px; }
.dialog-body {
  padding: 5px 7px 0 6px;
  background: #efefef;
  border: solid #35d0f0;
  border-width: 0 1px 2px;
  border-left-color: #b5d5f0;
}
.tabs { display: flex; align-items: flex-end; line-height: 16px; }
.tab { height: 28px; padding: 6px 7px 0 6px; border: solid; border-width: 1px 2px 0 0; border-color: #fff #747474; text-decoration: underline; }
.tab-active { height: 30px; padding: 6px 8px 0; border-left: 1px solid #fff; border-radius: 3px 0 0; }
.tab, .tabs-rest { border-bottom: 1px solid #fff; }
.tab-active { border-bottom: 0; }
.tabs-rest { flex: 1; }

.panel { padding: 20px 0 23px; border: solid #747474; border-width: 0 2px 2px 1px; border-left-color: #fff; }
.row { display: grid; grid-template-columns: 190px auto auto 1fr; align-items: start; column-gap: 10px; height: 25px; }
.row > label { padding-top: 6px; text-align: right; line-height: 16px; }
.field {
  height: 25px;
  padding: 0 3px 2px 4px;
  border: 1px solid;
  border-color: #a0a0a0 #fafafa #fafafa #a0a0a0;
  border-radius: 0;
  outline: 0;
  background: #fff;
  box-shadow: inset 1px 1px #696969, inset -1px -1px #e9e9e9;
  color: #000;
  font: 14px/16px "Liberation Sans", Arial, sans-serif;
}
.field[readonly] { background: #efefef; }
.field::selection { background: #000; color: #fff; }
.w-s { width: 100px; }
.w-m { width: 199px; }
.w-l { width: 400px; }
.w-xl { width: 450px; }
.row-combo { height: 30px; margin: 5px 0 0; }
.combo { position: relative; height: 30px; }
.combo .field { width: 100%; appearance: none; }
.combo-arrow {
  position: absolute;
  top: 1px;
  right: 0;
  display: grid;
  place-items: center;
  width: 30px;
  height: 28px;
  border: 1px solid;
  border-color: #fff #696969 #696969 #fff;
  box-shadow: inset -1px -1px #a0a0a0;
  background: #efefef;
  pointer-events: none;
}
.combo-arrow svg { width: 12px; height: 8px; }

.check { display: flex; align-items: center; gap: 4px; margin-left: 110px; height: 18px; color: #808080; }
.check input { appearance: none; width: 13px; height: 13px; margin: 0 0 2px; border: solid; border-width: 2px 1px 1px 2px; border-color: #808080 #fff #fff #808080; }

.foot { display: flex; gap: 5px; }
.stamp {
  width: 266px;
  height: 39px;
  margin-right: auto;
  padding: 16px 5px 0;
  border-right: 1px solid #fff;
  box-shadow: inset -1px 0 #a0a0a0;
  color: #868686;
  font-size: 11px;
  line-height: 16px;
}
.btn {
  display: flex;
  align-items: center;
  justify-content: center;
  width: 120px;
  height: 31px;
  margin-top: 5px;
  border: 1px solid;
  border-color: #fff #696969 #696969 #fff;
  box-shadow: inset -1px -1px #a0a0a0;
  font-weight: 700;
}
.btn svg { width: 14px; height: 14px; margin-right: 2px; }
.btn .icon-after { margin: 0 0 0 2px; }
.btn-main { background: #d6e0ec; }

/* Annotation */
.callout { position: absolute; left: 136px; top: 315px; width: 244px; height: 184px; color: #9400ff; }
.callout-shape { position: absolute; inset: 0; overflow: visible; fill: #fff; stroke: #9400ff; stroke-width: 2; filter: drop-shadow(1px 3px 2px rgba(0, 0, 0, .4)); }
.callout p { position: relative; width: 130px; margin: 46px 0 0 32px; text-align: center; font-size: 15px; line-height: 17px; }
```

FILE: script.js
```js
const nameField = document.getElementById('name');
nameField.focus();
nameField.select();
```
